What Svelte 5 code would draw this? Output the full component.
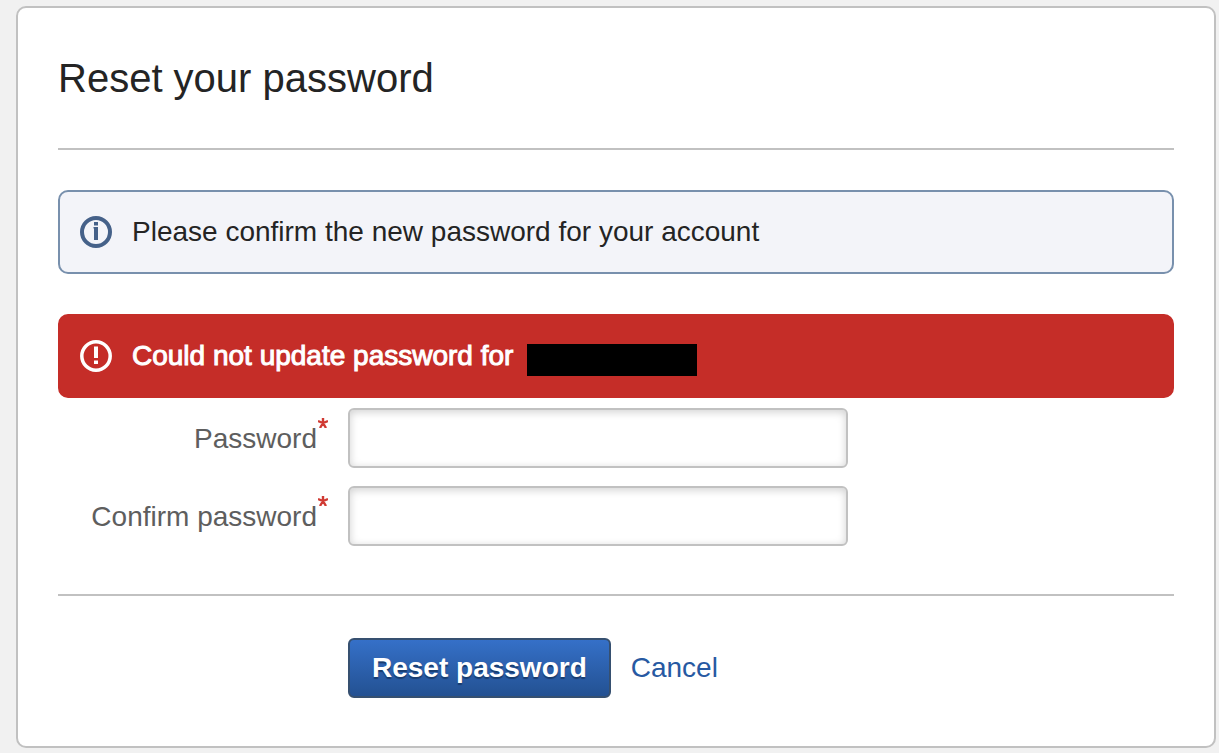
<script>
  let password = $state('');
  let confirmation = $state('');
</script>

<main class="card">
  <h1>Reset your password</h1>

  <form onsubmit={(event) => event.preventDefault()}>
    <div class="message info">
      <svg class="icon" viewBox="0 0 32 32" aria-hidden="true">
        <circle cx="16" cy="16" r="14" fill="none" stroke="#456189" stroke-width="4" />
        <path d="M14 6h4v3.500h-4zM13.500 11h4.500v13h-4v-11.500h-.5z" fill="#456189" />
      </svg>
      <p>Please confirm the new password for your account</p>
    </div>

    <div class="message error" role="alert">
      <svg class="icon" viewBox="0 0 32 32" aria-hidden="true">
        <circle cx="16" cy="16" r="14.200" fill="none" stroke="#fff" stroke-width="3.500" />
        <path d="M14 6.500h4v11.500h-4zM14 20.500h4v3.500h-4z" fill="#fff" />
      </svg>
      <p>Could not update password for</p>
      <span class="redacted"></span>
    </div>

    <div class="fields">
      <label for="password">Password<svg class="star" viewBox="0 0 10 10" aria-hidden="true"><path d="M5 0v5M0 3l5 2l5-2M2 10l3-5l3 5" /></svg></label>
      <input id="password" type="password" required bind:value={password} />
      <label for="confirm">Confirm password<svg class="star" viewBox="0 0 10 10" aria-hidden="true"><path d="M5 0v5M0 3l5 2l5-2M2 10l3-5l3 5" /></svg></label>
      <input id="confirm" type="password" required bind:value={confirmation} />
    </div>

    <div class="actions">
      <button type="submit">Reset password</button>
      <a href="#cancel">Cancel</a>
    </div>
  </form>
</main>

<style>
  :global(body) {
    background: #f1f1f1;
    color: #242424;
    font: 28px/40px "Liberation Sans", Arial, sans-serif;
  }

  .card {
    margin: 6px 3px 5px 16px;
    padding: 40px 40px 48px;
    border: 2px solid #c1c1c1;
    border-radius: 10px;
    background: #fff;
  }

  h1 {
    margin: 0;
    padding-bottom: 40px;
    border-bottom: 2px solid #c1c1c1;
    font-size: 40px;
    font-weight: 400;
    line-height: 60px;
  }

  .message {
    display: flex;
    align-items: center;
    margin-top: 40px;
    padding: 20px;
    border: 2px solid;
    border-radius: 10px;
  }

  .info {
    border-color: #7890ad;
    background: #f3f4f9;
  }

  .error {
    border-color: #c52d28;
    background: #c52d28;
    color: #fff;
    -webkit-text-stroke: 1px #fff;
  }

  .icon {
    flex: none;
    width: 32px;
    height: 32px;
    margin-right: 20px;
  }

  p {
    margin: 0;
  }

  .redacted {
    width: 170px;
    height: 32px;
    margin: 8px 0 0 14px;
    background: #000;
  }

  .fields {
    display: grid;
    grid-template-columns: 270px minmax(0, 500px);
    align-items: center;
    gap: 18px 20px;
    padding: 10px 0 48px;
    border-bottom: 2px solid #c1c1c1;
  }

  label {
    height: 40px;
    color: #5e5e5e;
    text-align: right;
    white-space: nowrap;
  }

  .star {
    width: 10px;
    height: 10px;
    margin-left: 1px;
    vertical-align: 20px;
    fill: none;
    stroke: #d03a33;
    stroke-width: 2.4;
  }

  input {
    box-sizing: border-box;
    width: 100%;
    height: 60px;
    padding: 8px 12px;
    border: 2px solid #c1c1c1;
    border-radius: 6px;
    background: #fff;
    box-shadow: inset 0 2px 8px #d0d0d0;
    font: inherit;
  }

  .actions {
    display: flex;
    align-items: center;
    gap: 20px;
    margin: 42px 0 0 290px;
  }

  button {
    height: 60px;
    padding: 0 22px;
    border: 2px solid #365070;
    border-radius: 6px;
    background: linear-gradient(#3570c8, #235192);
    color: #fff;
    font: bold 28px/40px "Liberation Sans", Arial, sans-serif;
    text-shadow: 0 2px 1px #183c6e;
  }

  a {
    color: #2759a2;
    text-decoration: none;
  }
</style>
